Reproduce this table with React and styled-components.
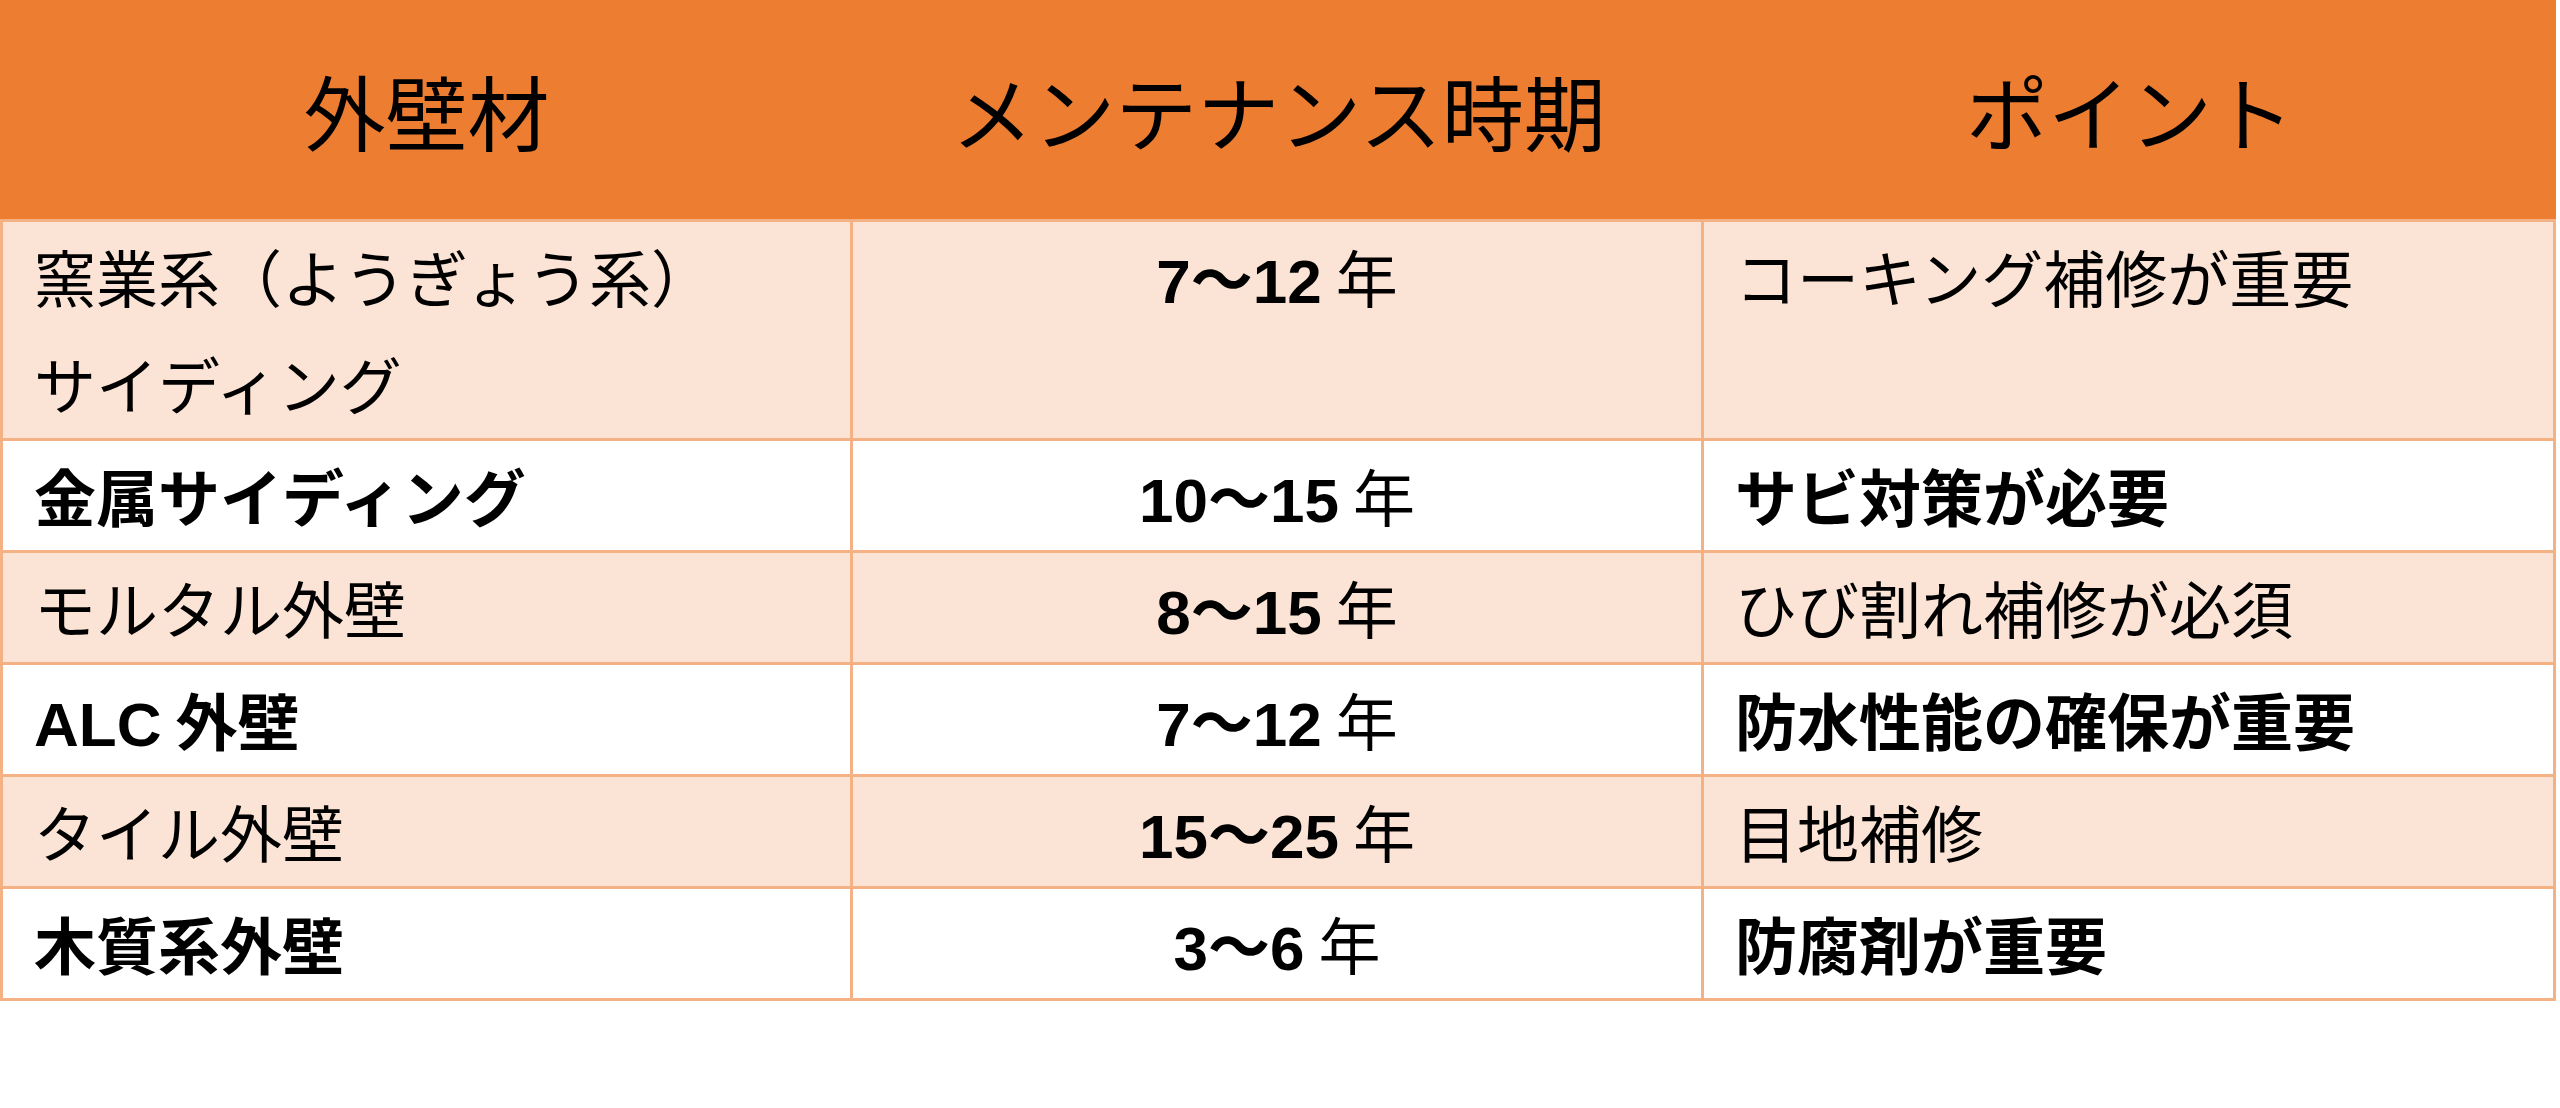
import React from "react";
import styled, { createGlobalStyle } from "styled-components";

const GlobalStyle = createGlobalStyle`
  html, body {
    margin: 0;
    padding: 0;
    background: #ffffff;
  }
  body {
    font-family: "Noto Sans CJK JP", sans-serif;
    color: #000000;
  }
`;

const Page = styled.div`
  width: 2560px;
  height: 1108px;
  background: #ffffff;
  overflow: hidden;
`;

const Table = styled.div`
  width: 2556px;
  display: flex;
  flex-direction: column;
`;

const Row = styled.div`
  display: grid;
  grid-template-columns: 853px 851px 852px;
  background: ${(p) => (p.$shaded ? "#FBE4D5" : "#FFFFFF")};
  border-bottom: 3px solid #f4b183;
`;

const HeaderRow = styled.div`
  display: grid;
  grid-template-columns: 853px 851px 852px;
  height: 222px;
  box-sizing: border-box;
  background: #ed7d31;
  border-bottom: 3px solid #f4b183;
`;

const HeaderCell = styled.div`
  display: flex;
  align-items: center;
  justify-content: center;
  font-family: "Noto Sans CJK JP", sans-serif;
  font-size: 82px;
  font-weight: 400;
  line-height: 1;
  color: #000000;
`;

const Cell = styled.div`
  box-sizing: border-box;
  border-right: 3px solid #f4b183;
  border-left: ${(p) => (p.$first ? "3px solid #f4b183" : "none")};
  padding: 1px ${(p) => (p.$center ? "0" : "20px")} 1px
    ${(p) => (p.$center ? "0" : "31px")};
  font-family: "Noto Sans CJK JP", sans-serif;
  font-size: 62px;
  line-height: 107px;
  font-weight: ${(p) => (p.$bold ? 700 : 400)};
  text-align: ${(p) => (p.$center ? "center" : "left")};
  white-space: nowrap;
`;

const Latin = styled.span`
  font-family: "Liberation Sans", "Noto Sans CJK JP", sans-serif;
  font-weight: 700;
  line-height: 1;
`;

const Year = styled.span`
  font-family: "Noto Sans CJK JP", sans-serif;
  font-weight: 400;
  line-height: 1;
`;

const rows = [
  {
    shaded: true,
    bold: false,
    material: (
      <>
        窯業系（ようぎょう系）
        <br />
        サイディング
      </>
    ),
    period: "7～12",
    point: "コーキング補修が重要",
  },
  {
    shaded: false,
    bold: true,
    material: "金属サイディング",
    period: "10～15",
    point: "サビ対策が必要",
  },
  {
    shaded: true,
    bold: false,
    material: "モルタル外壁",
    period: "8～15",
    point: "ひび割れ補修が必須",
  },
  {
    shaded: false,
    bold: true,
    material: (
      <>
        <Latin>ALC</Latin> 外壁
      </>
    ),
    period: "7～12",
    point: "防水性能の確保が重要",
  },
  {
    shaded: true,
    bold: false,
    material: "タイル外壁",
    period: "15～25",
    point: "目地補修",
  },
  {
    shaded: false,
    bold: true,
    material: "木質系外壁",
    period: "3～6",
    point: "防腐剤が重要",
  },
];

export default function App() {
  return (
    <>
      <GlobalStyle />
      <Page>
        <Table>
          <HeaderRow>
            <HeaderCell>外壁材</HeaderCell>
            <HeaderCell>メンテナンス時期</HeaderCell>
            <HeaderCell>ポイント</HeaderCell>
          </HeaderRow>
          {rows.map((r, i) => (
            <Row key={i} $shaded={r.shaded}>
              <Cell $first $bold={r.bold}>
                {r.material}
              </Cell>
              <Cell $center>
                <Latin>{r.period}</Latin> <Year>年</Year>
              </Cell>
              <Cell $bold={r.bold}>{r.point}</Cell>
            </Row>
          ))}
        </Table>
      </Page>
    </>
  );
}
